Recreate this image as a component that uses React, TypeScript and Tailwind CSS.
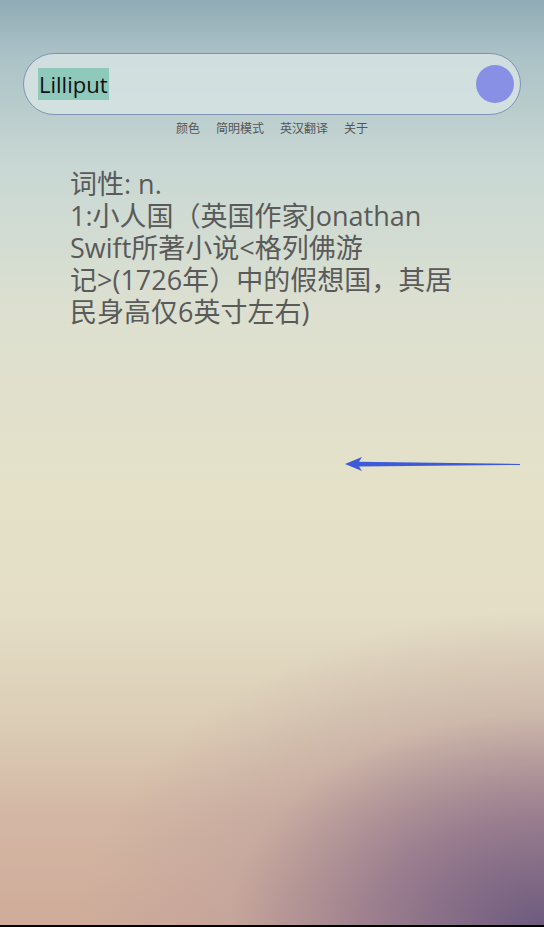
import * as React from "react";

const MENU = ["颜色", "简明模式", "英汉翻译", "关于"];

const DEFINITION = [
  "词性: n.",
  "1:小人国（英国作家Jonathan",
  "Swift所著小说<格列佛游",
  "记>(1726年）中的假想国，其居",
  "民身高仅6英寸左右)",
];

function Arrow() {
  return (
    <svg
      width="180"
      height="20"
      viewBox="0 0 180 20"
      className="absolute left-[343px] top-[454px]"
      aria-hidden
    >
      <path d="M2 10 L19 3 L16 7.8 L177 10 L177 11 L16 12.6 L19 17 Z" fill="#3d5ad8" />
    </svg>
  );
}

export default function App() {
  return (
    <div className="relative flex min-h-[927px] flex-col bg-[radial-gradient(ellipse_85%_34%_at_100%_100%,#6c5a7e_0%,rgba(140,112,138,0.8)_35%,rgba(185,155,155,0.4)_68%,rgba(210,180,165,0)_100%),linear-gradient(180deg,#90abb6_0%,#abc2c6_6%,#c9d8d4_18%,#dde0d0_34%,#e5e1c9_52%,#e4dec6_66%,#dccdb6_78%,#d3b7a4_88%,#cfab99_100%)] font-['Open_Sans','Noto_Sans_CJK_SC',sans-serif]">
      <div className="px-[23px] pt-[53px]">
        <div className="flex h-[62px] items-center justify-between rounded-full border border-[#8093b3] bg-[#dae5e5]/80 pl-[14px] pr-[6px]">
          <span className="bg-[#8ec9bb] px-px text-[22px] leading-[32px] text-[#111]">Lilliput</span>
          <span className="h-[38px] w-[38px] rounded-full bg-[#8890e6]" />
        </div>
      </div>

      <nav className="mt-[6px] flex justify-center gap-[16px] text-[12px] leading-[16px] text-[#555]">
        {MENU.map((item) => (
          <span key={item}>{item}</span>
        ))}
      </nav>

      <div className="mt-[31px] pl-[70px] text-[27px] leading-[32px] text-[#5a5a5a]">
        {DEFINITION.map((line) => (
          <div key={line} className="whitespace-nowrap">
            {line}
          </div>
        ))}
      </div>

      <div className="flex-1" />
      <div className="h-[2px] bg-black" />

      <Arrow />
    </div>
  );
}
